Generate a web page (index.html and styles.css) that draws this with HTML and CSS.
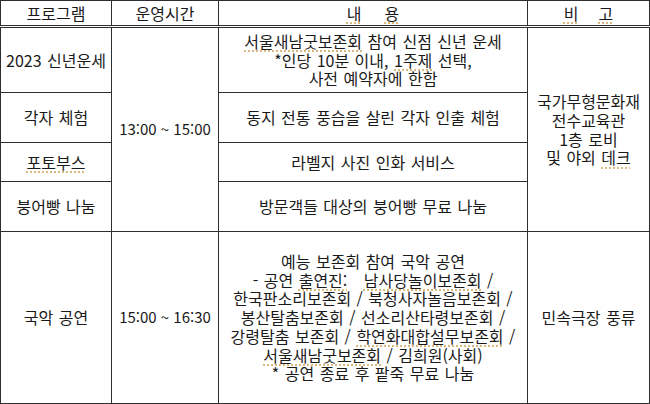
FILE: index.html
```html
<!DOCTYPE html>
<html lang="ko">
<head>
<meta charset="utf-8">
<link rel="stylesheet" href="styles.css">
</head>
<body>
<table class="sched">
  <colgroup>
    <col class="c1"><col class="c2"><col class="c3"><col class="c4">
  </colgroup>
  <thead>
    <tr class="head">
      <th>프로그램</th>
      <th>운영시간</th>
      <th><span class="sp">내<span class="gap"></span>용</span></th>
      <th><span class="sp">비<span class="gap2"></span>고</span></th>
    </tr>
  </thead>
  <tbody>
    <tr class="r1">
      <td>2023 신년운세</td>
      <td rowspan="4" class="time">13:00 ~ 15:00</td>
      <td class="lines r1c"><span class="sp">서울새남굿보존회</span> 참여 신점 신년 운세<br>*인당 10분 이내, <span class="sp">1주제</span> 선택,<br>사전 예약자에 한함</td>
      <td rowspan="4" class="lines">국가무형문화재<br>전수교육관<br>1층 로비<br>및 야외 <span class="sp">데크</span></td>
    </tr>
    <tr class="r2">
      <td>각자 체험</td>
      <td>동지 전통 풍습을 살린 각자 인출 체험</td>
    </tr>
    <tr class="r3">
      <td><span class="sp">포토부스</span></td>
      <td>라벨지 사진 인화 서비스</td>
    </tr>
    <tr class="r4">
      <td>붕어빵 나눔</td>
      <td>방문객들 대상의 붕어빵 무료 나눔</td>
    </tr>
    <tr class="r5">
      <td>국악 공연</td>
      <td class="time">15:00 ~ 16:30</td>
      <td class="lines wide">예능 보존회 참여 국악 공연<br>- 공연 <span class="sp">출연진:</span>&nbsp;&nbsp;&nbsp;<span class="sp">남사당놀이보존회</span> /<br>한국판소리보존회 / 북청사자놀음보존회 /<br>봉산탈춤보존회 / 선소리산타령보존회 /<br>강령탈춤 보존회 / <span class="sp">학연화대합설무보존회</span> /<br><span class="sp">서울새남굿보존회</span> / 김희원(사회)<br>* 공연 종료 후 팥죽 무료 나눔</td>
      <td>민속극장 풍류</td>
    </tr>
  </tbody>
</table>
</body>
</html>
```

FILE: styles.css
```css
html, body {
  margin: 0;
  padding: 0;
  background: #ffffff;
}

body {
  font-family: "Noto Sans CJK KR", "Noto Sans", sans-serif;
  font-size: 16px;
  word-spacing: 1px;
  color: #1a1a1a;
}

.sched {
  border-collapse: collapse;
  table-layout: fixed;
  width: 649px;
}

.c1 { width: 111px; }
.c2 { width: 107px; }
.c3 { width: 309px; }
.c4 { width: 122px; }

.sched th,
.sched td {
  border: 1px solid #2e2e2e;
  padding: 0;
  text-align: center;
  vertical-align: middle;
  font-weight: normal;
  line-height: 18.75px;
  white-space: nowrap;
}

.head th {
  height: 24px;
  border-bottom: 3px double #2e2e2e;
  line-height: 20px;
}

.r1 td { height: 64px; }
.r2 td { height: 49px; }
.r3 td { height: 38px; }
.r4 td { height: 49px; }
.r5 td { height: 171px; }

.time {
  font-size: 15px;
  word-spacing: 0;
}

.r1c {
  padding-bottom: 5px;
}

.wide {
  line-height: 19.3px;
}

.sp {
  text-decoration: underline dotted #d2a860;
  text-underline-offset: 3px;
}

.gap {
  display: inline-block;
  width: 23px;
}

.gap2 {
  display: inline-block;
  width: 20px;
}
```
